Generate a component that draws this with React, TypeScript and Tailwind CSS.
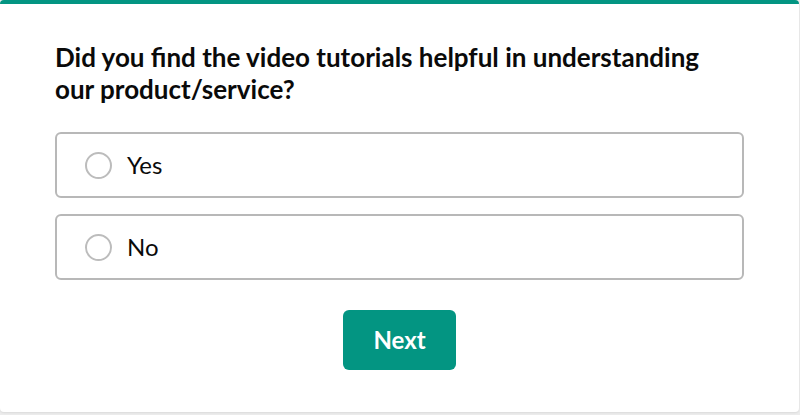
export default function App() {
  return (
    <div className="h-[415px] w-[800px] bg-[#ececec] font-['Lato',sans-serif]">
      <div className="h-[412px] w-[799px] rounded-[4px] border-t-[4px] border-[#039582] bg-white px-[55px] pt-[37px] shadow-[0_1px_2px_rgba(0,0,0,0.08)]">
        {/* Question */}
        <h2 className="text-[26px] font-bold leading-[32px] text-[#0a0a0a]">
          Did you find the video tutorials helpful in understanding our product/service?
        </h2>

        {/* Options */}
        <div className="mt-[27px] flex flex-col gap-[16px]">
          {["Yes", "No"].map((label) => (
            <label
              key={label}
              className="flex h-[66px] cursor-pointer items-center rounded-[6px] border-2 border-[#b8b8b8] pl-[28px]"
            >
              <span className="h-[27px] w-[27px] shrink-0 rounded-full border-2 border-[#bcbcbc] bg-white" />
              <span className="ml-[15px] text-[24px] text-[#0a0a0a]">{label}</span>
            </label>
          ))}
        </div>

        {/* Next button */}
        <div className="mt-[30px] flex justify-center">
          <button className="h-[60px] w-[113px] rounded-[6px] bg-[#039582] text-[24px] font-bold text-white">
            Next
          </button>
        </div>
      </div>
    </div>
  )
}
